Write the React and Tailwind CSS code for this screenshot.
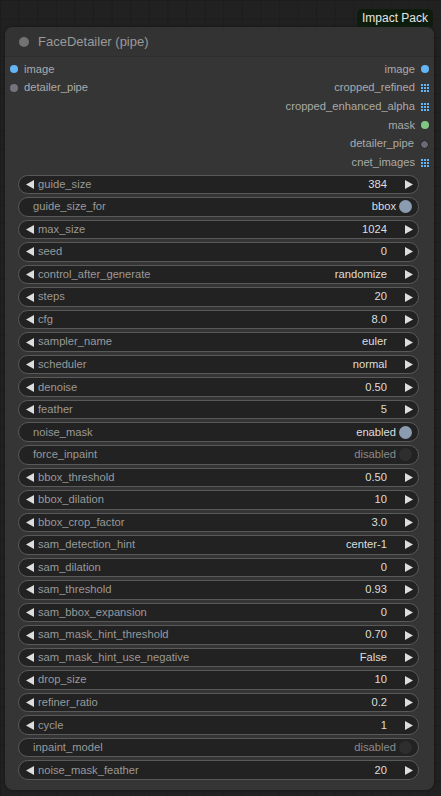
import React from 'react';

const inputs = [
  { name: 'image', color: 'bg-[#64b5f6]' },
  { name: 'detailer_pipe', color: 'bg-[#74747c]' },
];

const outputs = [
  { name: 'image', kind: 'dot', color: 'bg-[#64b5f6]' },
  { name: 'cropped_refined', kind: 'grid' },
  { name: 'cropped_enhanced_alpha', kind: 'grid' },
  { name: 'mask', kind: 'dot', color: 'bg-[#81c784]' },
  { name: 'detailer_pipe', kind: 'ring' },
  { name: 'cnet_images', kind: 'grid' },
];

const widgets = [
  { label: 'guide_size', value: '384' },
  { label: 'guide_size_for', value: 'bbox', toggle: true, on: true },
  { label: 'max_size', value: '1024' },
  { label: 'seed', value: '0' },
  { label: 'control_after_generate', value: 'randomize' },
  { label: 'steps', value: '20' },
  { label: 'cfg', value: '8.0' },
  { label: 'sampler_name', value: 'euler' },
  { label: 'scheduler', value: 'normal' },
  { label: 'denoise', value: '0.50' },
  { label: 'feather', value: '5' },
  { label: 'noise_mask', value: 'enabled', toggle: true, on: true },
  { label: 'force_inpaint', value: 'disabled', toggle: true, on: false },
  { label: 'bbox_threshold', value: '0.50' },
  { label: 'bbox_dilation', value: '10' },
  { label: 'bbox_crop_factor', value: '3.0' },
  { label: 'sam_detection_hint', value: 'center-1' },
  { label: 'sam_dilation', value: '0' },
  { label: 'sam_threshold', value: '0.93' },
  { label: 'sam_bbox_expansion', value: '0' },
  { label: 'sam_mask_hint_threshold', value: '0.70' },
  { label: 'sam_mask_hint_use_negative', value: 'False' },
  { label: 'drop_size', value: '10' },
  { label: 'refiner_ratio', value: '0.2' },
  { label: 'cycle', value: '1' },
  { label: 'inpaint_model', value: 'disabled', toggle: true, on: false },
  { label: 'noise_mask_feather', value: '20' },
];

function GridIcon() {
  const cells = [];
  for (let r = 0; r < 3; r++) {
    for (let c = 0; c < 3; c++) {
      cells.push(<rect key={`${r}-${c}`} x={c * 3} y={r * 3} width="2" height="2" fill="#64b5f6" />);
    }
  }
  return (
    <svg width="8" height="8" viewBox="0 0 8 8" className="shrink-0">
      {cells}
    </svg>
  );
}

function Arrow({ dir }) {
  return (
    <svg width="8" height="9" viewBox="0 0 8 9" className="shrink-0">
      {dir === 'left' ? (
        <polygon points="8,0 8,9 0,4.5" fill="#dddddd" />
      ) : (
        <polygon points="0,0 0,9 8,4.5" fill="#dddddd" />
      )}
    </svg>
  );
}

function Widget({ w }) {
  if (w.toggle) {
    return (
      <div className="h-[19.5px] rounded-full border border-[#595959] bg-[#222222] flex items-center pl-[14px] pr-[6px]">
        <span className="text-[#999999]">{w.label}</span>
        <span className={w.on ? 'ml-auto text-[#dddddd]' : 'ml-auto text-[#8a8a8a]'}>{w.value}</span>
        <span
          className={
            w.on
              ? 'ml-[3px] w-[13px] h-[13px] rounded-full bg-[#8b9cb1]'
              : 'ml-[3px] w-[13px] h-[13px] rounded-full bg-[#2e2e2e]'
          }
        />
      </div>
    );
  }
  return (
    <div className="h-[19.5px] rounded-full border border-[#595959] bg-[#222222] flex items-center pl-[7px] pr-[5px]">
      <Arrow dir="left" />
      <span className="ml-[4px] text-[#999999]">{w.label}</span>
      <span className="ml-auto text-[#dddddd]">{w.value}</span>
      <span className="ml-[18px] flex">
        <Arrow dir="right" />
      </span>
    </div>
  );
}

export default function App() {
  return (
    <div
      className="w-[441px] h-[796px] overflow-hidden bg-[#212121] bg-[linear-gradient(to_right,#1c1c1c_1px,transparent_1px),linear-gradient(to_bottom,#1c1c1c_1px,transparent_1px)] bg-[size:18.6px_18.6px] pt-[9px] text-[11.2px] leading-none"
      style={{ fontFamily: '"Liberation Sans", Arial, sans-serif' }}
    >
      {/* Badge */}
      <div className="flex justify-end pr-[8px]">
        <div className="h-[18px] px-[5px] rounded-t-[5px] rounded-b-[3px] bg-[#0e1c0e] text-[#e4e4e4] text-[12px] flex items-center">
          Impact Pack
        </div>
      </div>

      {/* Node */}
      <div className="ml-[5px] w-[429px] rounded-[8px] bg-[#353535] shadow-[0_0_3px_rgba(0,0,0,0.5)]">
        {/* Title */}
        <div className="h-[30px] flex items-center pl-[14px] border-b border-[#2e2e2e] bg-[#333333] rounded-t-[8px]">
          <span className="w-[10px] h-[10px] rounded-full bg-[#737373]" />
          <span className="ml-[9px] text-[13px] text-[#9a9a9a]">FaceDetailer (pipe)</span>
        </div>

        {/* Slots */}
        <div className="pt-[3px] flex justify-between text-[#aaaaaa]">
          <div className="flex flex-col pl-[5px]">
            {inputs.map((s) => (
              <div key={s.name} className="h-[18.7px] flex items-center">
                <span className={`w-[8px] h-[8px] rounded-full ${s.color}`} />
                <span className="ml-[6px]">{s.name}</span>
              </div>
            ))}
          </div>
          <div className="flex flex-col items-end pr-[5px]">
            {outputs.map((s) => (
              <div key={s.name + s.kind} className="h-[18.7px] flex items-center">
                <span className="mr-[6px]">{s.name}</span>
                {s.kind === 'grid' && <GridIcon />}
                {s.kind === 'dot' && <span className={`w-[8px] h-[8px] rounded-full ${s.color}`} />}
                {s.kind === 'ring' && (
                  <span className="w-[9px] h-[9px] rounded-full bg-[#6b6b75] border border-[#1e1e1e]" />
                )}
              </div>
            ))}
          </div>
        </div>

        {/* Widgets */}
        <div className="mt-[2.5px] pl-[13px] pr-[15px] pb-[10px] flex flex-col gap-[3.04px]">
          {widgets.map((w) => (
            <Widget key={w.label} w={w} />
          ))}
        </div>
      </div>
    </div>
  );
}
